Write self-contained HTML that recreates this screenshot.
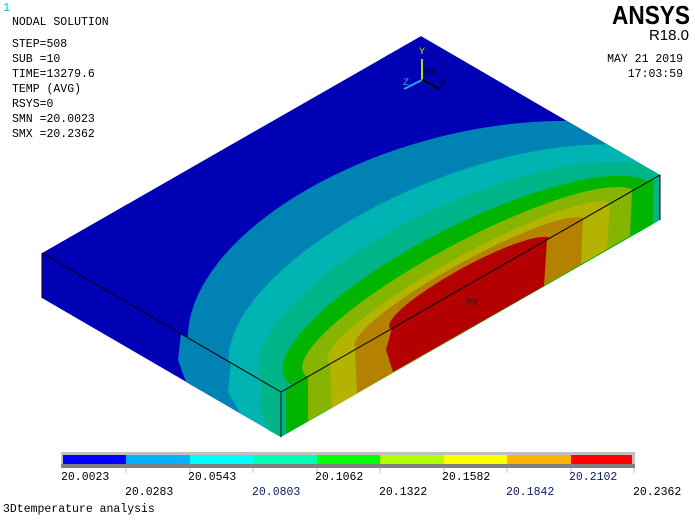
<!DOCTYPE html>
<html><head><meta charset="utf-8">
<style>
html,body{margin:0;padding:0;background:#fff;}
body{width:695px;height:521px;overflow:hidden;position:relative;}
svg{position:absolute;left:0;top:0;}
.m{font-family:"Liberation Mono",monospace;font-size:11.5px;fill:#000;}
</style></head><body>
<svg width="695" height="521" viewBox="0 0 695 521" xmlns="http://www.w3.org/2000/svg">
<defs>
<clipPath id="ct"><rect x="0" y="0" width="1" height="1"/></clipPath>
</defs>
<!-- top face -->
<g transform="matrix(379,-217,-239,-139,281,392)" clip-path="url(#ct)">
<rect x="0" y="0" width="1" height="1" fill="#0000b4"/>
<ellipse cx="0.5" cy="0" rx="0.61" ry="0.68" fill="#0082b4"/>
<ellipse cx="0.5" cy="0" rx="0.563" ry="0.478" fill="#00b4b4"/>
<ellipse cx="0.5" cy="0" rx="0.513" ry="0.355" fill="#00b48a"/>
<ellipse cx="0.5" cy="0" rx="0.47" ry="0.251" fill="#00b400"/>
<ellipse cx="0.5" cy="0" rx="0.43" ry="0.177" fill="#87b400"/>
<ellipse cx="0.5" cy="0" rx="0.37" ry="0.121" fill="#b4b400"/>
<ellipse cx="0.5" cy="0" rx="0.30" ry="0.095" fill="#b48200"/>
<ellipse cx="0.5" cy="0" rx="0.21" ry="0.073" fill="#b40000"/>
</g>
<!-- left face -->
<polygon points="42,253 281,392 281,437 42,298" fill="#0000b4"/>
<polygon points="181,334 281,392 281,437 186,382 178,360" fill="#0082b4"/>
<polygon points="231,363 281,392 281,437 240,413 228,392" fill="#00b4b4"/>
<polygon points="262,381 281,392 281,437 268,430 260,408" fill="#00b48a"/>
<!-- right face -->
<polygon points="281,392 660,175 660,220 281,437" fill="#00b48a"/>
<polygon points="286,389 653,179 653,224 286,434" fill="#00b400"/>
<polygon points="308,376 632,191 630,236 308,421" fill="#87b400"/>
<polygon points="330,364 610,204 607,249 332,408" fill="#b4b400"/>
<polygon points="355,350 583,219 581,264 357,393" fill="#b48200"/>
<polygon points="392,328 547,240 544,286 393,372 386,350" fill="#b40000"/>
<!-- edges -->
<g stroke="#000" stroke-width="1" fill="none">
<line x1="42" y1="253" x2="281" y2="392"/>
<line x1="281" y1="392" x2="660" y2="175"/>
<line x1="281" y1="392" x2="281" y2="437"/>
<line x1="660" y1="175" x2="660" y2="220"/>
<line x1="42" y1="253" x2="42" y2="298"/>
</g>
<text x="466" y="305" class="m" style="font-size:10px;fill:#222">MX</text>
<!-- triad -->
<line x1="422" y1="59" x2="422" y2="80" stroke="#b4dc00" stroke-width="2"/>
<line x1="422" y1="80" x2="404" y2="89" stroke="#28a8e0" stroke-width="2"/>
<line x1="422" y1="80" x2="440" y2="89" stroke="#000" stroke-width="2"/>
<text x="419" y="54" class="m" style="font-size:10px;fill:#c8e000">Y</text>
<text x="403" y="85" class="m" style="font-size:10px;fill:#28a8e0">Z</text>
<text x="440" y="85" class="m" style="font-size:10px">X</text>
<text x="425" y="75" class="m" style="font-size:9px">MN</text>
<!-- header text -->
<text x="3" y="11" class="m" style="fill:#00c8c8;font-size:12px">1</text>
<text x="12" y="25" class="m">NODAL SOLUTION</text>
<text x="12" y="47" class="m">STEP=508</text>
<text x="12" y="62" class="m">SUB =10</text>
<text x="12" y="77" class="m">TIME=13279.6</text>
<text x="12" y="92" class="m">TEMP     (AVG)</text>
<text x="12" y="107" class="m">RSYS=0</text>
<text x="12" y="122" class="m">SMN =20.0023</text>
<text x="12" y="137" class="m">SMX =20.2362</text>
<text x="612" y="24" style="font-family:'Liberation Sans',sans-serif;font-weight:bold;font-size:26px" textLength="78" lengthAdjust="spacingAndGlyphs">ANSYS</text>
<text x="689" y="40" text-anchor="end" style="font-family:'Liberation Sans',sans-serif;font-size:15px">R18.0</text>
<text x="683" y="62" text-anchor="end" class="m">MAY 21 2019</text>
<text x="683" y="77" text-anchor="end" class="m">17:03:59</text>
<!-- legend -->
<rect x="61" y="452" width="574" height="16" fill="#c0c0c0"/>
<rect x="61" y="464" width="574" height="4" fill="#808080"/>
<g>
<rect x="63" y="455" width="63" height="9" fill="#0000ff"/>
<rect x="126" y="455" width="64" height="9" fill="#00b2ff"/>
<rect x="190" y="455" width="63" height="9" fill="#00ffff"/>
<rect x="253" y="455" width="64" height="9" fill="#00ffb2"/>
<rect x="317" y="455" width="63" height="9" fill="#00ff00"/>
<rect x="380" y="455" width="64" height="9" fill="#b2ff00"/>
<rect x="444" y="455" width="63" height="9" fill="#ffff00"/>
<rect x="507" y="455" width="64" height="9" fill="#ffb200"/>
<rect x="571" y="455" width="61" height="9" fill="#ff0000"/>
</g>
<g stroke="#c0c0c0"><line x1="126" y1="468" x2="126" y2="473"/><line x1="190" y1="468" x2="190" y2="473"/><line x1="253" y1="468" x2="253" y2="473"/><line x1="317" y1="468" x2="317" y2="473"/><line x1="380" y1="468" x2="380" y2="473"/><line x1="444" y1="468" x2="444" y2="473"/><line x1="507" y1="468" x2="507" y2="473"/><line x1="571" y1="468" x2="571" y2="473"/><line x1="634" y1="468" x2="634" y2="473"/></g>
<text x="61" y="480" class="m">20.0023</text>
<text x="188" y="480" class="m">20.0543</text>
<text x="315" y="480" class="m">20.1062</text>
<text x="442" y="480" class="m">20.1582</text>
<text x="569" y="480" class="m" style="fill:#102060">20.2102</text>
<text x="125" y="495" class="m">20.0283</text>
<text x="252" y="495" class="m" style="fill:#102060">20.0803</text>
<text x="379" y="495" class="m">20.1322</text>
<text x="506" y="495" class="m" style="fill:#102060">20.1842</text>
<text x="633" y="495" class="m">20.2362</text>
<text x="3" y="512" class="m">3Dtemperature analysis</text>
</svg>
</body></html>
